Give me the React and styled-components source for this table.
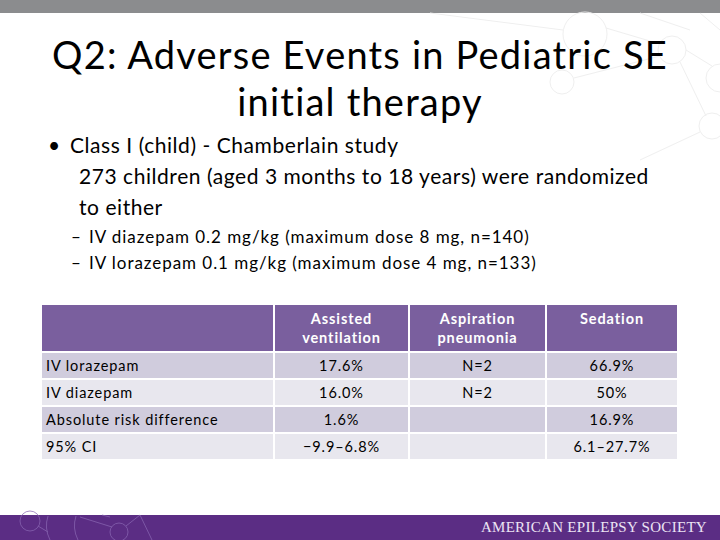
import React from "react";
import styled, { createGlobalStyle } from "styled-components";

const GlobalStyle = createGlobalStyle`
  html, body {
    margin: 0;
    padding: 0;
    background: #ffffff;
  }
  body {
    font-family: Lato, "Open Sans", sans-serif;
    color: #000;
  }
`;

const header = ["", "Assisted ventilation", "Aspiration pneumonia", "Sedation"];
const rows = [
  ["IV lorazepam", "17.6%", "N=2", "66.9%"],
  ["IV diazepam", "16.0%", "N=2", "50%"],
  ["Absolute risk difference", "1.6%", "", "16.9%"],
  ["95% CI", "\u22129.9\u20136.8%", "", "6.1\u201327.7%"],
];

function Network() {
  return (
    <Decor viewBox="0 0 720 540" aria-hidden="true">
      <g fill="none" stroke="#efefef" strokeWidth="1">
        <circle cx="585" cy="34" r="22" />
        <circle cx="672" cy="50" r="14" />
        <circle cx="720" cy="78" r="14" />
        <circle cx="712" cy="126" r="13" />
        <circle cx="562" cy="82" r="12" />
        <line x1="430" y1="13" x2="563" y2="30" />
        <line x1="606" y1="28" x2="660" y2="44" />
        <line x1="640" y1="13" x2="690" y2="30" />
        <line x1="686" y1="50" x2="712" y2="66" />
        <line x1="574" y1="78" x2="660" y2="56" />
        <line x1="680" y1="62" x2="706" y2="116" />
        <line x1="700" y1="13" x2="720" y2="30" />
        <line x1="640" y1="160" x2="700" y2="132" />
      </g>
      <g fill="none" stroke="#8a68b3" strokeWidth="0.9" opacity="0.8">
        <circle cx="30" cy="521" r="10" />
        <circle cx="119" cy="532" r="9" />
        <line x1="38" y1="526" x2="48" y2="532" />
        <path d="M48 516 Q44 528 50 540" />
        <path d="M76 516 Q72 528 78 540" />
        <line x1="80" y1="517" x2="112" y2="527" />
        <line x1="126" y1="526" x2="140" y2="515" />
        <line x1="140" y1="515" x2="152" y2="540" />
        <line x1="102" y1="515" x2="110" y2="517" />
      </g>
    </Decor>
  );
}

export default function App() {
  return (
    <>
      <GlobalStyle />
      <Slide>
        <Network />
        <TopBar />
        <Title>
          Q2: Adverse Events in Pediatric SE
          <br />
          initial therapy
        </Title>
        <Bullets>
          <Point>
            <Dot>•</Dot>
            <div>
              Class I (child) - Chamberlain study
              <Lead>
                273 children (aged 3 months to 18 years) were randomized
                <br />
                to either
              </Lead>
            </div>
          </Point>
          <SubList>
            <SubPoint>
              <Dash>–</Dash>IV diazepam 0.2 mg/kg (maximum dose 8 mg, n=140)
            </SubPoint>
            <SubPoint>
              <Dash>–</Dash>IV lorazepam 0.1 mg/kg (maximum dose 4 mg, n=133)
            </SubPoint>
          </SubList>
        </Bullets>
        <Table>
          <colgroup>
            <col style={{ width: 231 }} />
            <col style={{ width: 133 }} />
            <col style={{ width: 135 }} />
            <col style={{ width: 130 }} />
          </colgroup>
          <thead>
            <tr>
              {header.map((h, i) => (
                <Head key={i}>{h}</Head>
              ))}
            </tr>
          </thead>
          <tbody>
            {rows.map((r, i) => (
              <tr key={i}>
                {r.map((c, j) => (
                  <Cell key={j} $shade={i % 2 === 0} $first={j === 0}>
                    {c}
                  </Cell>
                ))}
              </tr>
            ))}
          </tbody>
        </Table>
        <Footer>
          <Society>American Epilepsy Society</Society>
        </Footer>
      </Slide>
    </>
  );
}

const Slide = styled.div`
  position: relative;
  width: 720px;
  height: 540px;
  overflow: hidden;
  display: flex;
  flex-direction: column;
  background: #fff;
`;

const Decor = styled.svg`
  position: absolute;
  inset: 0;
  width: 720px;
  height: 540px;
  z-index: 1;
  pointer-events: none;
`;

const TopBar = styled.div`
  height: 13px;
  background: #8b8c8e;
  flex-shrink: 0;
`;

const Title = styled.h1`
  position: relative;
  z-index: 2;
  margin: 18px 0 0;
  font-family: Lato, "Open Sans", sans-serif;
  font-weight: 400;
  font-size: 38px;
  line-height: 47px;
  text-align: center;
  letter-spacing: 1.2px;
`;

const Bullets = styled.div`
  position: relative;
  z-index: 2;
  margin: 4px 0 0 48px;
  font-size: 21px;
  letter-spacing: 0.55px;
`;

const Point = styled.div`
  display: flex;
  line-height: 31px;
`;

const Dot = styled.span`
  width: 22px;
  flex-shrink: 0;
`;

const Lead = styled.div`
  margin-left: 9px;
`;

const SubList = styled.div`
  margin: 2px 0 0 23px;
`;

const SubPoint = styled.div`
  font-size: 17px;
  letter-spacing: 0.95px;
  line-height: 26px;
  display: flex;
`;

const Dash = styled.span`
  width: 18px;
  flex-shrink: 0;
`;

const Table = styled.table`
  position: relative;
  z-index: 2;
  margin: 27px 0 0 40px;
  border-collapse: separate;
  border-spacing: 2px;
  table-layout: fixed;
  width: 639px;
  font-family: Lato, "Open Sans", sans-serif;
  font-size: 14.5px;
  letter-spacing: 0.9px;
`;

const Head = styled.th`
  background: #7a5f9e;
  color: #fff;
  font-weight: 700;
  height: 46px;
  padding: 4px 4px 0;
  box-sizing: border-box;
  vertical-align: top;
  line-height: 19px;
  text-align: center;
`;

const Cell = styled.td`
  background: ${(p) => (p.$shade ? "#d0ccdd" : "#e8e7ee")};
  height: 25px;
  padding: 0 4px;
  box-sizing: border-box;
  text-align: ${(p) => (p.$first ? "left" : "center")};
  vertical-align: middle;
`;

const Footer = styled.div`
  position: absolute;
  left: 0;
  right: 0;
  bottom: 0;
  height: 25px;
  background: #5b2d84;
  display: flex;
  align-items: center;
  justify-content: flex-end;
  padding-right: 13px;
`;

const Society = styled.span`
  position: relative;
  z-index: 2;
  font-family: "Liberation Serif", serif;
  font-size: 15px;
  text-transform: uppercase;
  color: #ece4f4;
  letter-spacing: 0.3px;
`;
